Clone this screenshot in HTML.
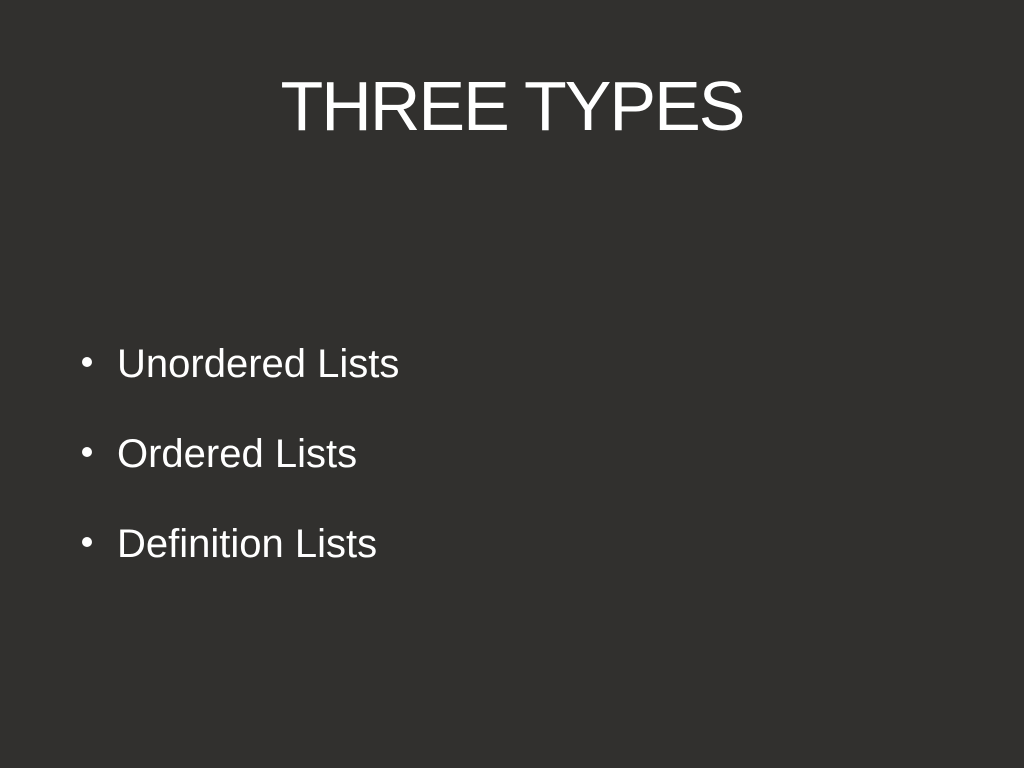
<!DOCTYPE html>
<html><head><style>
html,body{margin:0;padding:0;width:1024px;height:768px;background:#31302e;overflow:hidden;}
body{position:relative;font-family:"Liberation Sans",sans-serif;color:#fff;}
.t{position:absolute;left:0;width:1024px;top:66px;text-align:center;font-size:70px;line-height:80px;font-weight:normal;letter-spacing:-2px;}
.li{position:absolute;left:117px;font-size:40px;line-height:44px;}
.b{position:absolute;left:82px;width:10px;height:10px;border-radius:50%;background:#fff;}
</style></head><body>
<div class="t">THREE TYPES</div>
<div class="b" style="top:357px"></div><div class="li" style="top:342px">Unordered Lists</div>
<div class="b" style="top:447px"></div><div class="li" style="top:432px">Ordered Lists</div>
<div class="b" style="top:537px"></div><div class="li" style="top:522px">Definition Lists</div>
</body></html>
